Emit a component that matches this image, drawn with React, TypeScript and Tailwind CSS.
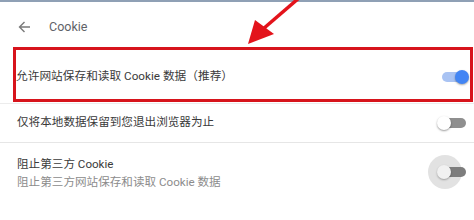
import React from "react";

function Toggle({ on, focus }: { on: boolean; focus?: boolean }) {
  return (
    <div className="relative w-[32px] h-[14px] shrink-0">
      {focus && (
        <div className="absolute left-[-9px] top-[-10px] w-[34px] h-[34px] rounded-full bg-[#e2e2e2]" />
      )}
      <div
        className={
          on
            ? "absolute left-[5px] right-[4px] top-[2px] h-[10px] rounded-full bg-[#a9c3f3]"
            : focus
            ? "absolute left-[6px] right-[3px] top-[2px] h-[10px] rounded-full bg-[#7d7d7d]"
            : "absolute left-[6px] right-[3px] top-[2px] h-[10px] rounded-full bg-[#8f8f8f]"
        }
      />
      <div
        className={
          on
            ? "absolute right-0 top-0 w-[14px] h-[14px] rounded-full bg-[#4285f4] shadow-[0_1px_2px_rgba(0,0,0,0.35)]"
            : focus
            ? "absolute left-0 top-0 w-[14px] h-[14px] rounded-full bg-[#f1f1f1] shadow-[0_1px_2px_rgba(0,0,0,0.3)]"
            : "absolute left-0 top-0 w-[14px] h-[14px] rounded-full bg-white shadow-[0_1px_2px_rgba(0,0,0,0.4)]"
        }
      />
    </div>
  );
}

export default function App() {
  return (
    <div
      className="relative w-[474px] h-[220px] bg-white overflow-hidden"
      style={{ fontFamily: "Roboto, 'Noto Sans CJK SC', sans-serif" }}
    >
      <div className="h-[2px] bg-[#8fa0b5]" />
      <div className="h-[46px] pt-[4px] flex items-center">
        <svg className="ml-[18px]" width="13" height="12" viewBox="0 0 13 12">
          <path d="M12 6H1.5M6.5 1L1.5 6l5 5" fill="none" stroke="#7a7a7a" strokeWidth="1.4" />
        </svg>
        <span className="ml-[18px] text-[12.5px] text-[#5f6368]">Cookie</span>
      </div>

      <div className="h-[55px] pt-[3px] flex items-center justify-between pl-[16px] pr-[5px]">
        <span className="text-[11.7px] text-[#3a3a3a]">允许网站保存和读取 Cookie 数据（推荐）</span>
        <Toggle on />
      </div>
      <div className="h-px bg-[#ececec]" />
      <div className="h-[38px] flex items-center justify-between pl-[17px] pr-[5px]">
        <span className="text-[11.6px] text-[#3a3a3a]">仅将本地数据保留到您退出浏览器为止</span>
        <Toggle on={false} />
      </div>
      <div className="h-px bg-[#e6e6e6]" />
      <div className="h-[58px] flex items-center justify-between pl-[17px] pr-[5px]">
        <div className="flex flex-col leading-[18px] pt-[1px]">
          <span className="text-[11.6px] text-[#3a3a3a]">阻止第三方 Cookie</span>
          <span className="text-[11.6px] text-[#8c8c8c]">阻止第三方网站保存和读取 Cookie 数据</span>
        </div>
        <Toggle on={false} focus />
      </div>

      <div className="absolute left-[13px] top-[47px] w-[460px] h-[55px] border-[3px] border-[#d7141c] pointer-events-none" />
      <svg className="absolute left-0 top-0 pointer-events-none" width="474" height="220" viewBox="0 0 474 220">
        <line x1="299" y1="-2" x2="263" y2="29" stroke="#e3131b" strokeWidth="3.5" />
        <polygon points="248,44 255,20 274,34" fill="#e3131b" />
      </svg>
    </div>
  );
}
